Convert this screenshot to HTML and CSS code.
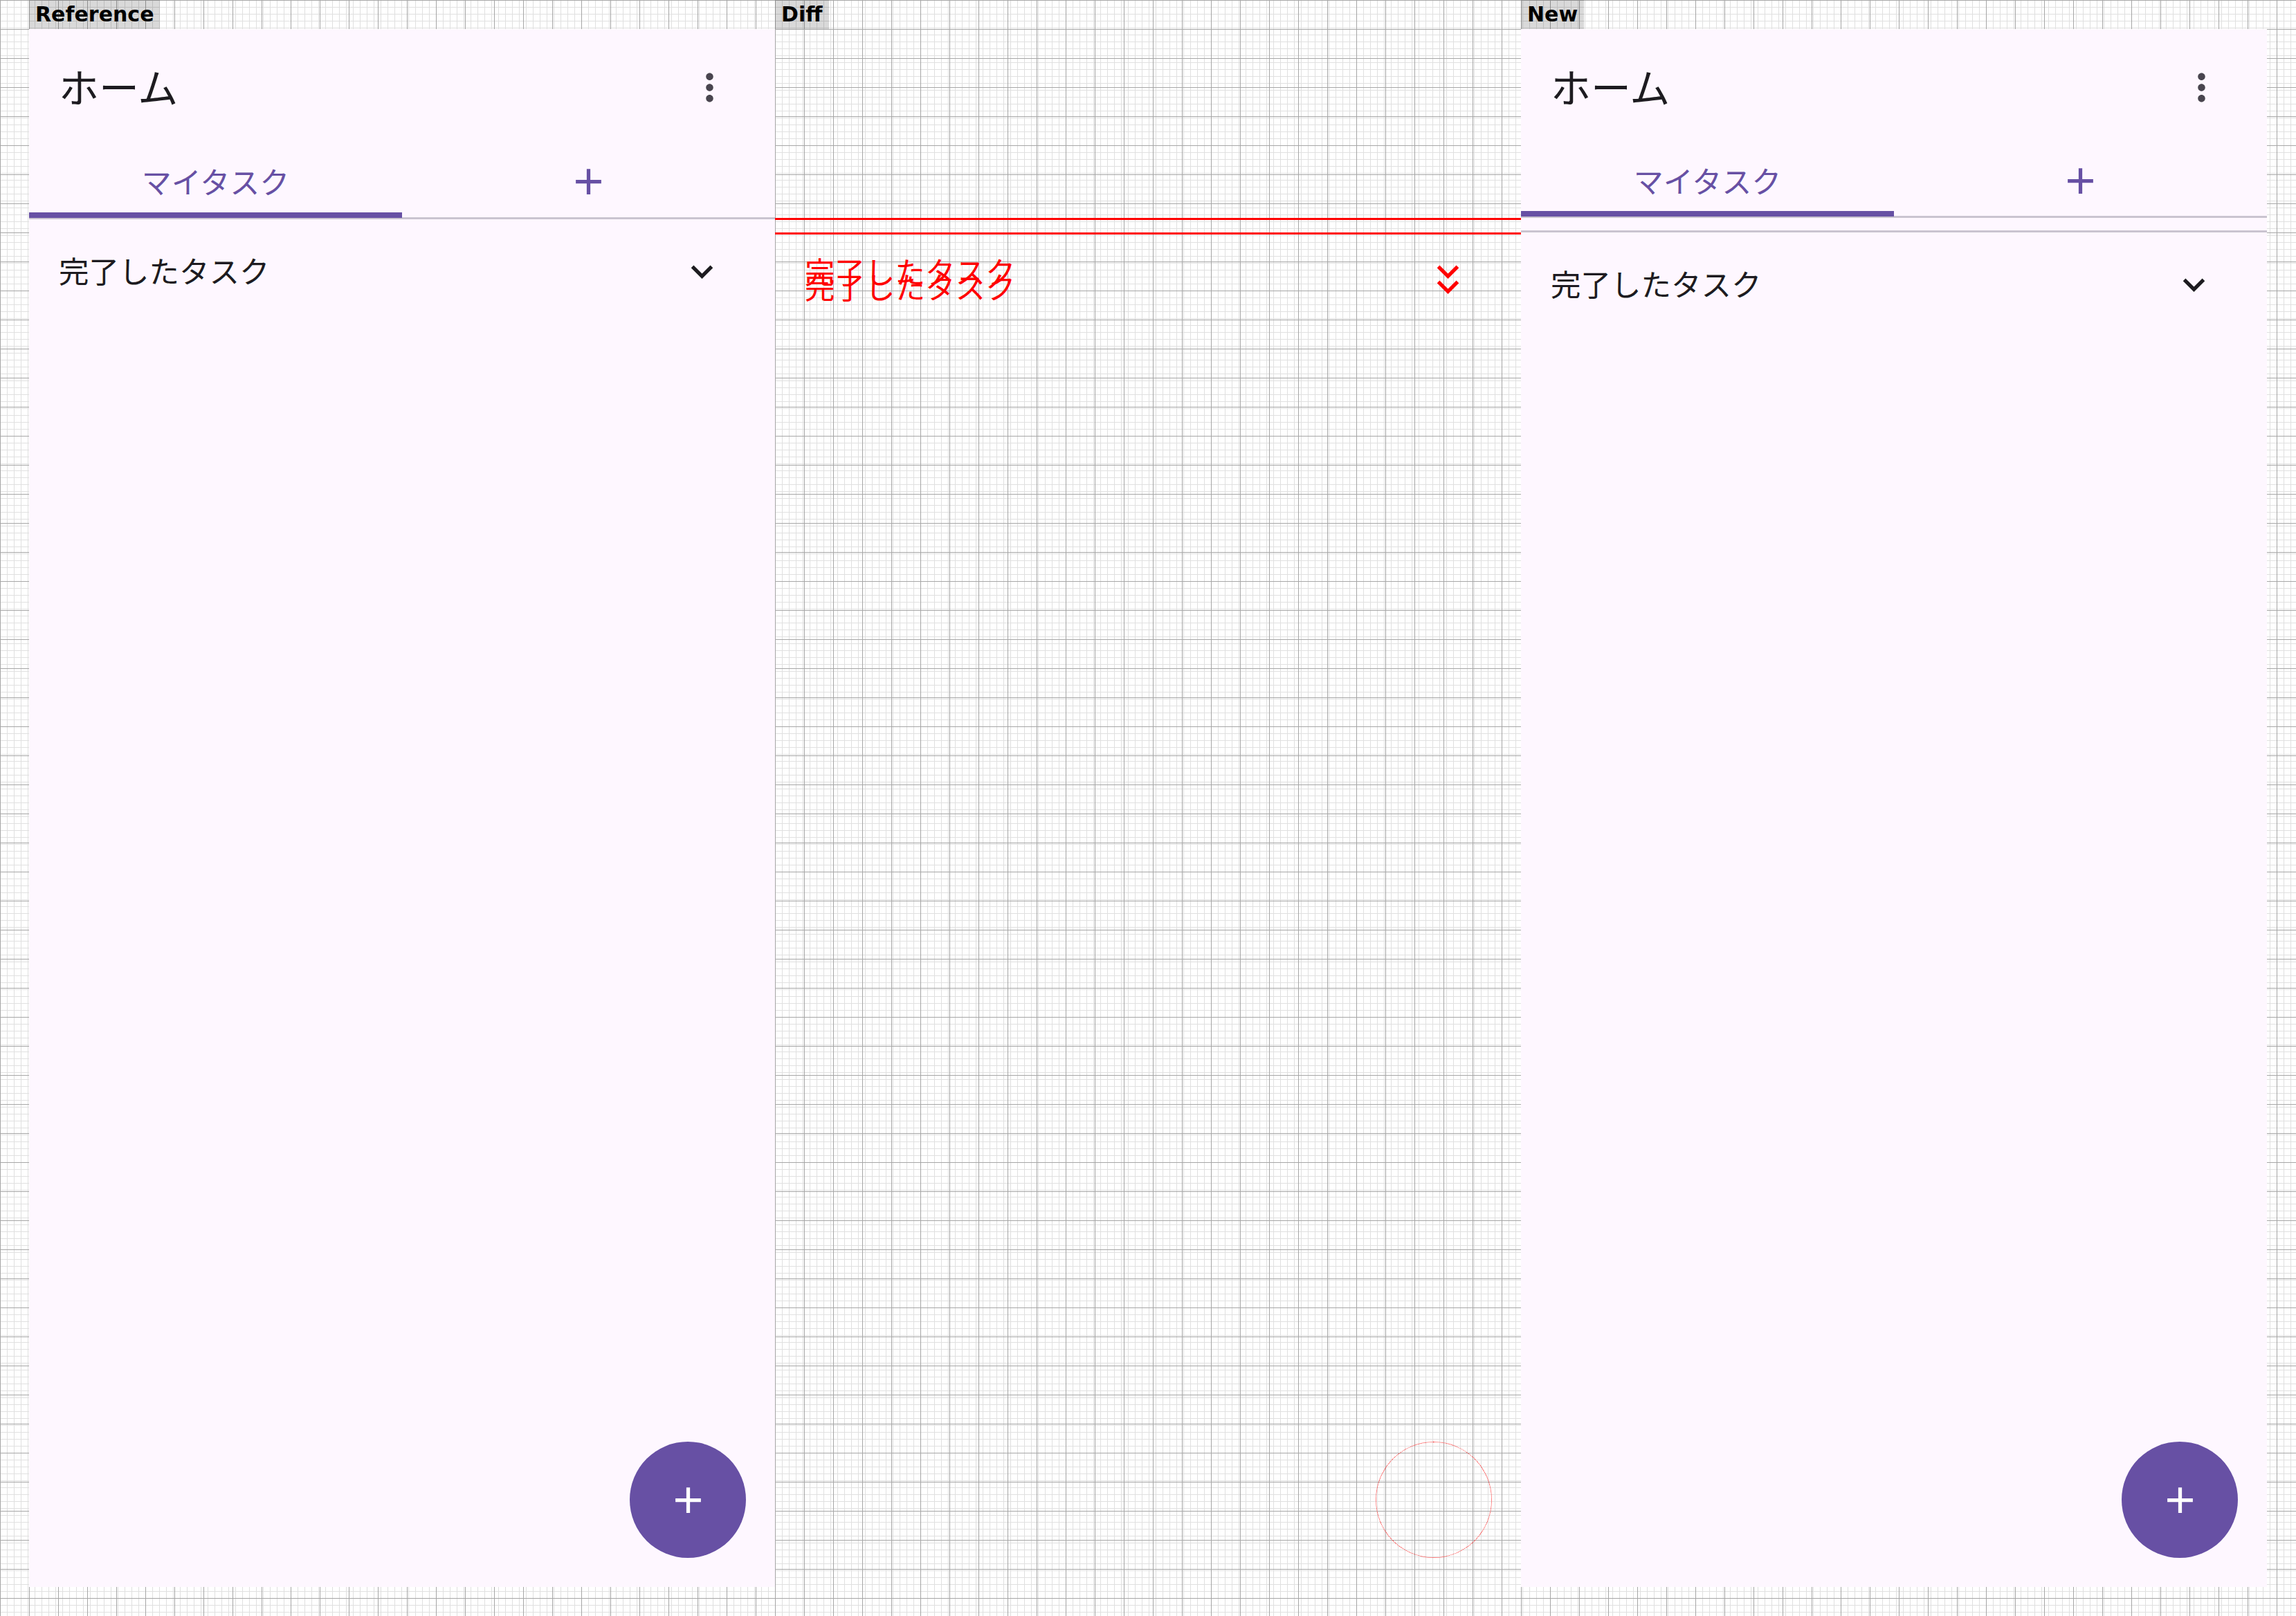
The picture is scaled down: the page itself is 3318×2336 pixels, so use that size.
FILE: index.html
```html
<!DOCTYPE html>
<html lang="ja">
<head>
<meta charset="utf-8">
<title>ホーム</title>
<link rel="stylesheet" href="styles.css">
</head>
<body>
<div class="board">
  <section class="col col-ref">
    <div class="label-bar"><span class="label">Reference</span></div>
    <div class="screen">
      <header class="appbar">
        <h1 class="title">ホーム</h1>
        <span class="icon more"><svg viewBox="0 0 24 24"><path d="M12 8c1.1 0 2-.9 2-2s-.9-2-2-2-2 .9-2 2 .9 2 2 2zm0 2c-1.1 0-2 .9-2 2s.9 2 2 2 2-.9 2-2-.9-2-2-2zm0 6c-1.1 0-2 .9-2 2s.9 2 2 2 2-.9 2-2-.9-2-2-2z"/></svg></span>
      </header>
      <nav class="tabs">
        <div class="tab active"><span class="tab-text">マイタスク</span><i class="indicator"></i></div>
        <div class="tab"><span class="icon add"><svg viewBox="0 0 24 24"><path d="M19 13h-6v6h-2v-6H5v-2h6V5h2v6h6v2z"/></svg></span></div>
      </nav>
      <div class="row">
        <span class="row-text">完了したタスク</span>
        <span class="icon chevron"><svg viewBox="0 0 24 24"><path d="M16.59 8.59 12 13.17 7.41 8.59 6 10l6 6 6-6z"/></svg></span>
      </div>
      <div class="fab"><span class="icon fab-add"><svg viewBox="0 0 24 24"><path d="M19 13h-6v6h-2v-6H5v-2h6V5h2v6h6v2z"/></svg></span></div>
    </div>
  </section>

  <section class="col col-diff">
    <div class="label-bar"><span class="label">Diff</span></div>
    <div class="diff-screen">
      <div class="diff-top"></div>
      <div class="diff-line"></div>
      <div class="diff-gap"></div>
      <div class="diff-line"></div>
      <div class="diff-rows">
        <div class="row diff-row row-a">
          <span class="row-text">完了したタスク</span>
          <span class="icon chevron"><svg viewBox="0 0 24 24"><path d="M16.59 8.59 12 13.17 7.41 8.59 6 10l6 6 6-6z"/></svg></span>
        </div>
        <div class="row diff-row row-b">
          <span class="row-text">完了したタスク</span>
          <span class="icon chevron"><svg viewBox="0 0 24 24"><path d="M16.59 8.59 12 13.17 7.41 8.59 6 10l6 6 6-6z"/></svg></span>
        </div>
      </div>
      <div class="diff-fab"></div>
    </div>
  </section>

  <section class="col col-new">
    <div class="label-bar"><span class="label">New</span></div>
    <div class="screen">
      <header class="appbar">
        <h1 class="title">ホーム</h1>
        <span class="icon more"><svg viewBox="0 0 24 24"><path d="M12 8c1.1 0 2-.9 2-2s-.9-2-2-2-2 .9-2 2 .9 2 2 2zm0 2c-1.1 0-2 .9-2 2s.9 2 2 2 2-.9 2-2-.9-2-2-2zm0 6c-1.1 0-2 .9-2 2s.9 2 2 2 2-.9 2-2-.9-2-2-2z"/></svg></span>
      </header>
      <nav class="tabs tabs-new">
        <div class="tab active"><span class="tab-text">マイタスク</span><i class="indicator"></i></div>
        <div class="tab"><span class="icon add"><svg viewBox="0 0 24 24"><path d="M19 13h-6v6h-2v-6H5v-2h6V5h2v6h6v2z"/></svg></span></div>
      </nav>
      <div class="extra-divider"></div>
      <div class="row">
        <span class="row-text">完了したタスク</span>
        <span class="icon chevron"><svg viewBox="0 0 24 24"><path d="M16.59 8.59 12 13.17 7.41 8.59 6 10l6 6 6-6z"/></svg></span>
      </div>
      <div class="fab"><span class="icon fab-add"><svg viewBox="0 0 24 24"><path d="M19 13h-6v6h-2v-6H5v-2h6V5h2v6h6v2z"/></svg></span></div>
    </div>
  </section>
</div>
</body>
</html>
```

FILE: styles.css
```css
html, body {
  margin: 0;
  padding: 0;
}

body {
  width: 3318px;
  height: 2336px;
  overflow: hidden;
  font-family: "Noto Sans CJK JP", "Noto Sans", sans-serif;
}

.board {
  display: flex;
  width: 3318px;
  height: 2336px;
}

.col {
  box-sizing: border-box;
  height: 2336px;
  background-color: #ffffff;
  background-image:
    linear-gradient(to right, #a6a6a6 1px, transparent 1px),
    linear-gradient(to bottom, #a6a6a6 1px, transparent 1px),
    linear-gradient(to right, #e0e0e0 1px, transparent 1px),
    linear-gradient(to bottom, #e0e0e0 1px, transparent 1px);
  background-size: 42px 42px, 42px 42px, 10px 10px, 10px 10px;
  background-position: 0 0, 0 0, 0 0, 0 0;
}

.col-ref {
  width: 1120px;
  padding-left: 42px;
}

.col-diff {
  width: 1078px;
}

.col-new {
  width: 1120px;
  padding-right: 42px;
  background-position: 0 0, 0 0, 2px 0, 0 0;
}

.label-bar {
  height: 42px;
}

.label {
  display: inline-block;
  height: 42px;
  line-height: 42px;
  padding: 0 9px;
  background: rgba(0, 0, 0, 0.15);
  color: #000;
  font-family: "DejaVu Sans", sans-serif;
  font-weight: bold;
  font-size: 30px;
}

/* phone screen */
.screen {
  position: relative;
  width: 1078px;
  height: 2252px;
  background: #fef7ff;
  display: flex;
  flex-direction: column;
}

.icon {
  display: block;
  width: 63px;
  height: 63px;
  flex: none;
}

.icon svg {
  display: block;
  width: 63px;
  height: 63px;
  fill: currentColor;
}

.appbar {
  height: 169px;
  display: flex;
  align-items: center;
  padding: 0 63px 0 43px;
}

.title {
  flex: 1;
  margin: 0;
  font-size: 58px;
  font-weight: 400;
  line-height: 1;
  color: #1d1b20;
  position: relative;
  top: -3px;
}

.more {
  color: #49454f;
}

.tabs {
  height: 106px;
  box-sizing: border-box;
  display: flex;
  border-bottom: 3px solid #cac4d0;
}

.tab {
  flex: 1;
  position: relative;
  display: flex;
  align-items: center;
  justify-content: center;
  color: #6750a4;
}

.tab-text {
  font-size: 43px;
  line-height: 1;
  position: relative;
  top: -1px;
}

.indicator {
  position: absolute;
  left: 0;
  right: 0;
  bottom: -1px;
  height: 8px;
  background: #6750a4;
}

.tabs-new {
  height: 104px;
}

.extra-divider {
  height: 3px;
  margin-top: 18px;
  background: #cac4d0;
}

.row {
  height: 150px;
  display: flex;
  align-items: center;
  padding: 0 74px 0 43px;
  color: #1d1b20;
}

.row-text {
  flex: 1;
  font-size: 43.5px;
  line-height: 1;
  position: relative;
  top: -1px;
}

.chevron {
  color: #1d1b20;
}

.fab {
  position: absolute;
  right: 42px;
  bottom: 42px;
  width: 168px;
  height: 168px;
  border-radius: 50%;
  background: #6750a4;
  display: flex;
  align-items: center;
  justify-content: center;
  color: #ffffff;
}

/* diff panel */
.diff-screen {
  position: relative;
  width: 1078px;
  height: 2252px;
  display: flex;
  flex-direction: column;
}

.diff-top {
  height: 273px;
}

.diff-line {
  height: 2.5px;
  background: #ff0000;
}

.diff-gap {
  height: 18.5px;
}

.diff-rows {
  display: grid;
}

.diff-row {
  grid-area: 1 / 1;
  color: #ff0000;
}

.diff-row .chevron {
  color: #ff0000;
}

.row-a {
  margin-top: -21px;
}

.row-b {
  margin-top: 1px;
}

.diff-fab {
  position: absolute;
  right: 42px;
  bottom: 42px;
  width: 168px;
  height: 168px;
  box-sizing: border-box;
  border-radius: 50%;
  border: 1.5px dotted #ff0000;
}
```
